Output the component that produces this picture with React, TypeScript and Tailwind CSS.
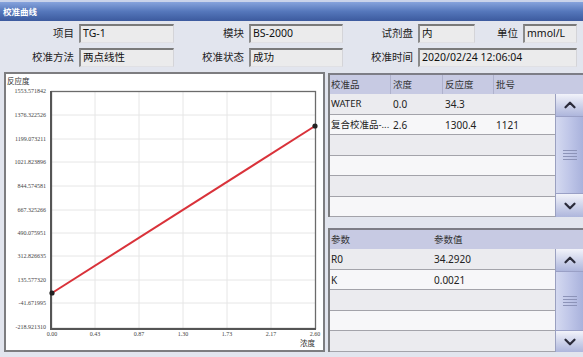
import { ChevronUp, ChevronDown } from 'lucide-react'

const font = { fontFamily: '"Noto Sans", "Noto Sans CJK SC", sans-serif' }

function Field({ label, value, lw, bw }: { label: string; value: string; lw: string; bw: string }) {
  return (
    <>
      <div className={`${lw} shrink-0 text-right pr-[5px] text-[10.5px] text-[#222] leading-[19px]`}>{label}</div>
      <div className={`${bw} shrink-0 h-[19px] bg-[#ebebec] border-t-2 border-l-2 border-t-[#7a7a7a] border-l-[#8a8a8a] border-r border-b border-r-[#d4d4d8] border-b-[#e0e0e4] pl-[2px] text-[10.5px] leading-[14px] text-[#111]`}>
        {value}
      </div>
    </>
  )
}

function ScrollBar({ upH, downH }: { upH: string; downH: string }) {
  return (
    <div className="w-[28px] shrink-0 flex flex-col border-l border-[#9aa0c0]">
      <div className={`${upH} shrink-0 bg-gradient-to-b from-[#f2f3fa] to-[#aeb6dc] flex items-center justify-center border-b border-[#9aa0c6]`}>
        <ChevronUp size={18} strokeWidth={3} color="#2b2b3a" />
      </div>
      <div className="flex-1 bg-gradient-to-r from-[#d4d9f0] via-[#bfc6e8] to-[#a9b2dc] flex flex-col items-center justify-center gap-[2px]">
        <div className="w-[14px] h-px bg-[#8c93b8]" />
        <div className="w-[14px] h-px bg-[#8c93b8]" />
        <div className="w-[14px] h-px bg-[#8c93b8]" />
        <div className="w-[14px] h-px bg-[#8c93b8]" />
      </div>
      <div className={`${downH} shrink-0 bg-gradient-to-b from-[#f2f3fa] to-[#aeb6dc] flex items-center justify-center border-t border-[#9aa0c6]`}>
        <ChevronDown size={18} strokeWidth={3} color="#2b2b3a" />
      </div>
    </div>
  )
}

const yLabels = [
  ['1553.571842', 91], ['1376.322526', 115], ['1199.073211', 139], ['1021.823896', 162],
  ['844.574581', 186], ['667.325266', 210], ['490.075951', 233], ['312.826635', 256],
  ['135.577320', 280], ['-41.671995', 303], ['-218.921310', 327],
] as const
const xLabels = [['0.00', 52], ['0.43', 95], ['0.87', 139], ['1.30', 183], ['1.73', 227], ['2.17', 271], ['2.60', 315]] as const

function Chart() {
  return (
    <div className="w-[321px] h-[280px] shrink-0 ml-[4px] border-2 border-[#7d7d80] bg-white">
      <svg width="317" height="276" viewBox="6 74 317 276">
        {yLabels.slice(1, -1).map(([, y]) => (
          <line key={y} x1="52" x2="315" y1={y} y2={y} stroke="#e6e6e6" strokeWidth="1" />
        ))}
        {xLabels.slice(1, -1).map(([, x]) => (
          <line key={x} x1={x} x2={x} y1="91" y2="328" stroke="#e6e6e6" strokeWidth="1" />
        ))}
        <rect x="51.5" y="91.5" width="264" height="237" fill="none" stroke="#6b6b6b" strokeWidth="1.3" />
        <line x1="51" x2="51" y1="91" y2="330" stroke="#555" strokeWidth="2" />
        <line x1="50" x2="316" y1="329" y2="329" stroke="#555" strokeWidth="2" />
        <line x1="52" y1="293" x2="315" y2="126" stroke="#d9323a" strokeWidth="2" />
        <circle cx="52" cy="293" r="2.6" fill="#222" />
        <circle cx="315" cy="126" r="2.6" fill="#222" />
        <g fontFamily='"Liberation Serif", serif' fontSize="6" fill="#444">
          {yLabels.map(([t, y]) => (
            <text key={t} x="46" y={y + 2} textAnchor="end">{t}</text>
          ))}
          {xLabels.map(([t, x]) => (
            <text key={t} x={x} y="336" textAnchor="middle">{t}</text>
          ))}
        </g>
        <g fontFamily='"Noto Sans CJK SC", sans-serif' fontSize="7.5" fill="#333">
          <text x="7" y="84">反应度</text>
          <text x="300" y="346">浓度</text>
        </g>
      </svg>
    </div>
  )
}

export default function App() {
  const rows1 = [
    ['WATER', '0.0', '34.3', ''],
    ['复合校准品-...', '2.6', '1300.4', '1121'],
    ['', '', '', ''], ['', '', '', ''], ['', '', '', ''], ['', '', '', ''],
  ]
  const rows2 = [['R0', '34.2920'], ['K', '0.0021'], ['', ''], ['', ''], ['', '']]
  return (
    <div className="w-[583px] h-[357px] overflow-hidden bg-[#e2e5ee] flex flex-col" style={font}>
      <div className="h-[2px] bg-[#c9d3ea]" />
      <div className="h-[19px] bg-gradient-to-b from-[#86a3dc] via-[#5577bb] to-[#3c5a9e] text-white text-[8.5px] leading-[19px] pl-[3px] font-bold">
        校准曲线
      </div>
      <div className="mt-[3px] flex h-[19px]">
        <Field label="项目" value="TG-1" lw="w-[79px]" bw="w-[95px]" />
        <Field label="模块" value="BS-2000" lw="w-[75px]" bw="w-[94px]" />
        <Field label="试剂盘" value="内" lw="w-[75px]" bw="w-[57px]" />
        <Field label="单位" value="mmol/L" lw="w-[48px]" bw="w-[54px]" />
      </div>
      <div className="mt-[5px] flex h-[19px]">
        <Field label="校准方法" value="两点线性" lw="w-[79px]" bw="w-[95px]" />
        <Field label="校准状态" value="成功" lw="w-[75px]" bw="w-[94px]" />
        <Field label="校准时间" value="2020/02/24 12:06:04" lw="w-[75px]" bw="w-[159px]" />
      </div>
      <div className="mt-[5px] flex">
        <Chart />
        <div className="ml-[3px] flex-1 flex flex-col">
          <div className="mt-[1px] h-[144px] flex flex-col border-l-2 border-[#7d7d80]">
            <div className="h-[21px] shrink-0 flex bg-[#c7cae3] border-t-2 border-[#7d7d86] text-[9.5px] text-[#333] leading-[19px]">
              <div className="w-[61px] pl-[1px] border-r border-[#aeb1cc]">校准品</div>
              <div className="w-[52px] pl-[2px] border-r border-[#aeb1cc]">浓度</div>
              <div className="w-[51px] pl-[2px] border-r border-[#aeb1cc]">反应度</div>
              <div className="flex-1 pl-[2px]">批号</div>
            </div>
            <div className="flex-1 flex">
              <div className="flex-1 flex flex-col">
                {rows1.map((r, i) => (
                  <div key={i} className={`h-[20.5px] flex text-[10px] text-[#222] leading-[20px] border-b border-[#a3a3aa] ${i % 2 === 0 ? 'bg-[#ebebef]' : 'bg-[#f7f7f9]'}`}>
                    <div className="w-[61px] pl-[1px] whitespace-nowrap overflow-hidden text-[9.5px]">{r[0]}</div>
                    <div className="w-[52px] pl-[2px]">{r[1]}</div>
                    <div className="w-[51px] pl-[2px]">{r[2]}</div>
                    <div className="flex-1 pl-[2px]">{r[3]}</div>
                  </div>
                ))}
              </div>
              <ScrollBar upH="h-[23px]" downH="h-[24px]" />
            </div>
          </div>
          <div className="mt-[11px] h-[124px] flex flex-col border-l-2 border-[#7d7d80]">
            <div className="h-[21px] shrink-0 flex bg-[#c7cae3] border-t-2 border-[#7d7d86] text-[9.5px] text-[#333] leading-[19px]">
              <div className="w-[102px] pl-[1px]">参数</div>
              <div className="flex-1 pl-[2px]">参数值</div>
            </div>
            <div className="flex-1 flex">
              <div className="flex-1 flex flex-col">
                {rows2.map((r, i) => (
                  <div key={i} className={`h-[20.6px] flex text-[10px] text-[#222] leading-[20px] border-b border-[#a3a3aa] ${i % 2 === 0 ? 'bg-[#ebebef]' : 'bg-[#f7f7f9]'}`}>
                    <div className="w-[102px] pl-[1px]">{r[0]}</div>
                    <div className="flex-1 pl-[2px]">{r[1]}</div>
                  </div>
                ))}
              </div>
              <ScrollBar upH="h-[23px]" downH="h-[22px]" />
            </div>
          </div>
        </div>
      </div>
    </div>
  )
}
